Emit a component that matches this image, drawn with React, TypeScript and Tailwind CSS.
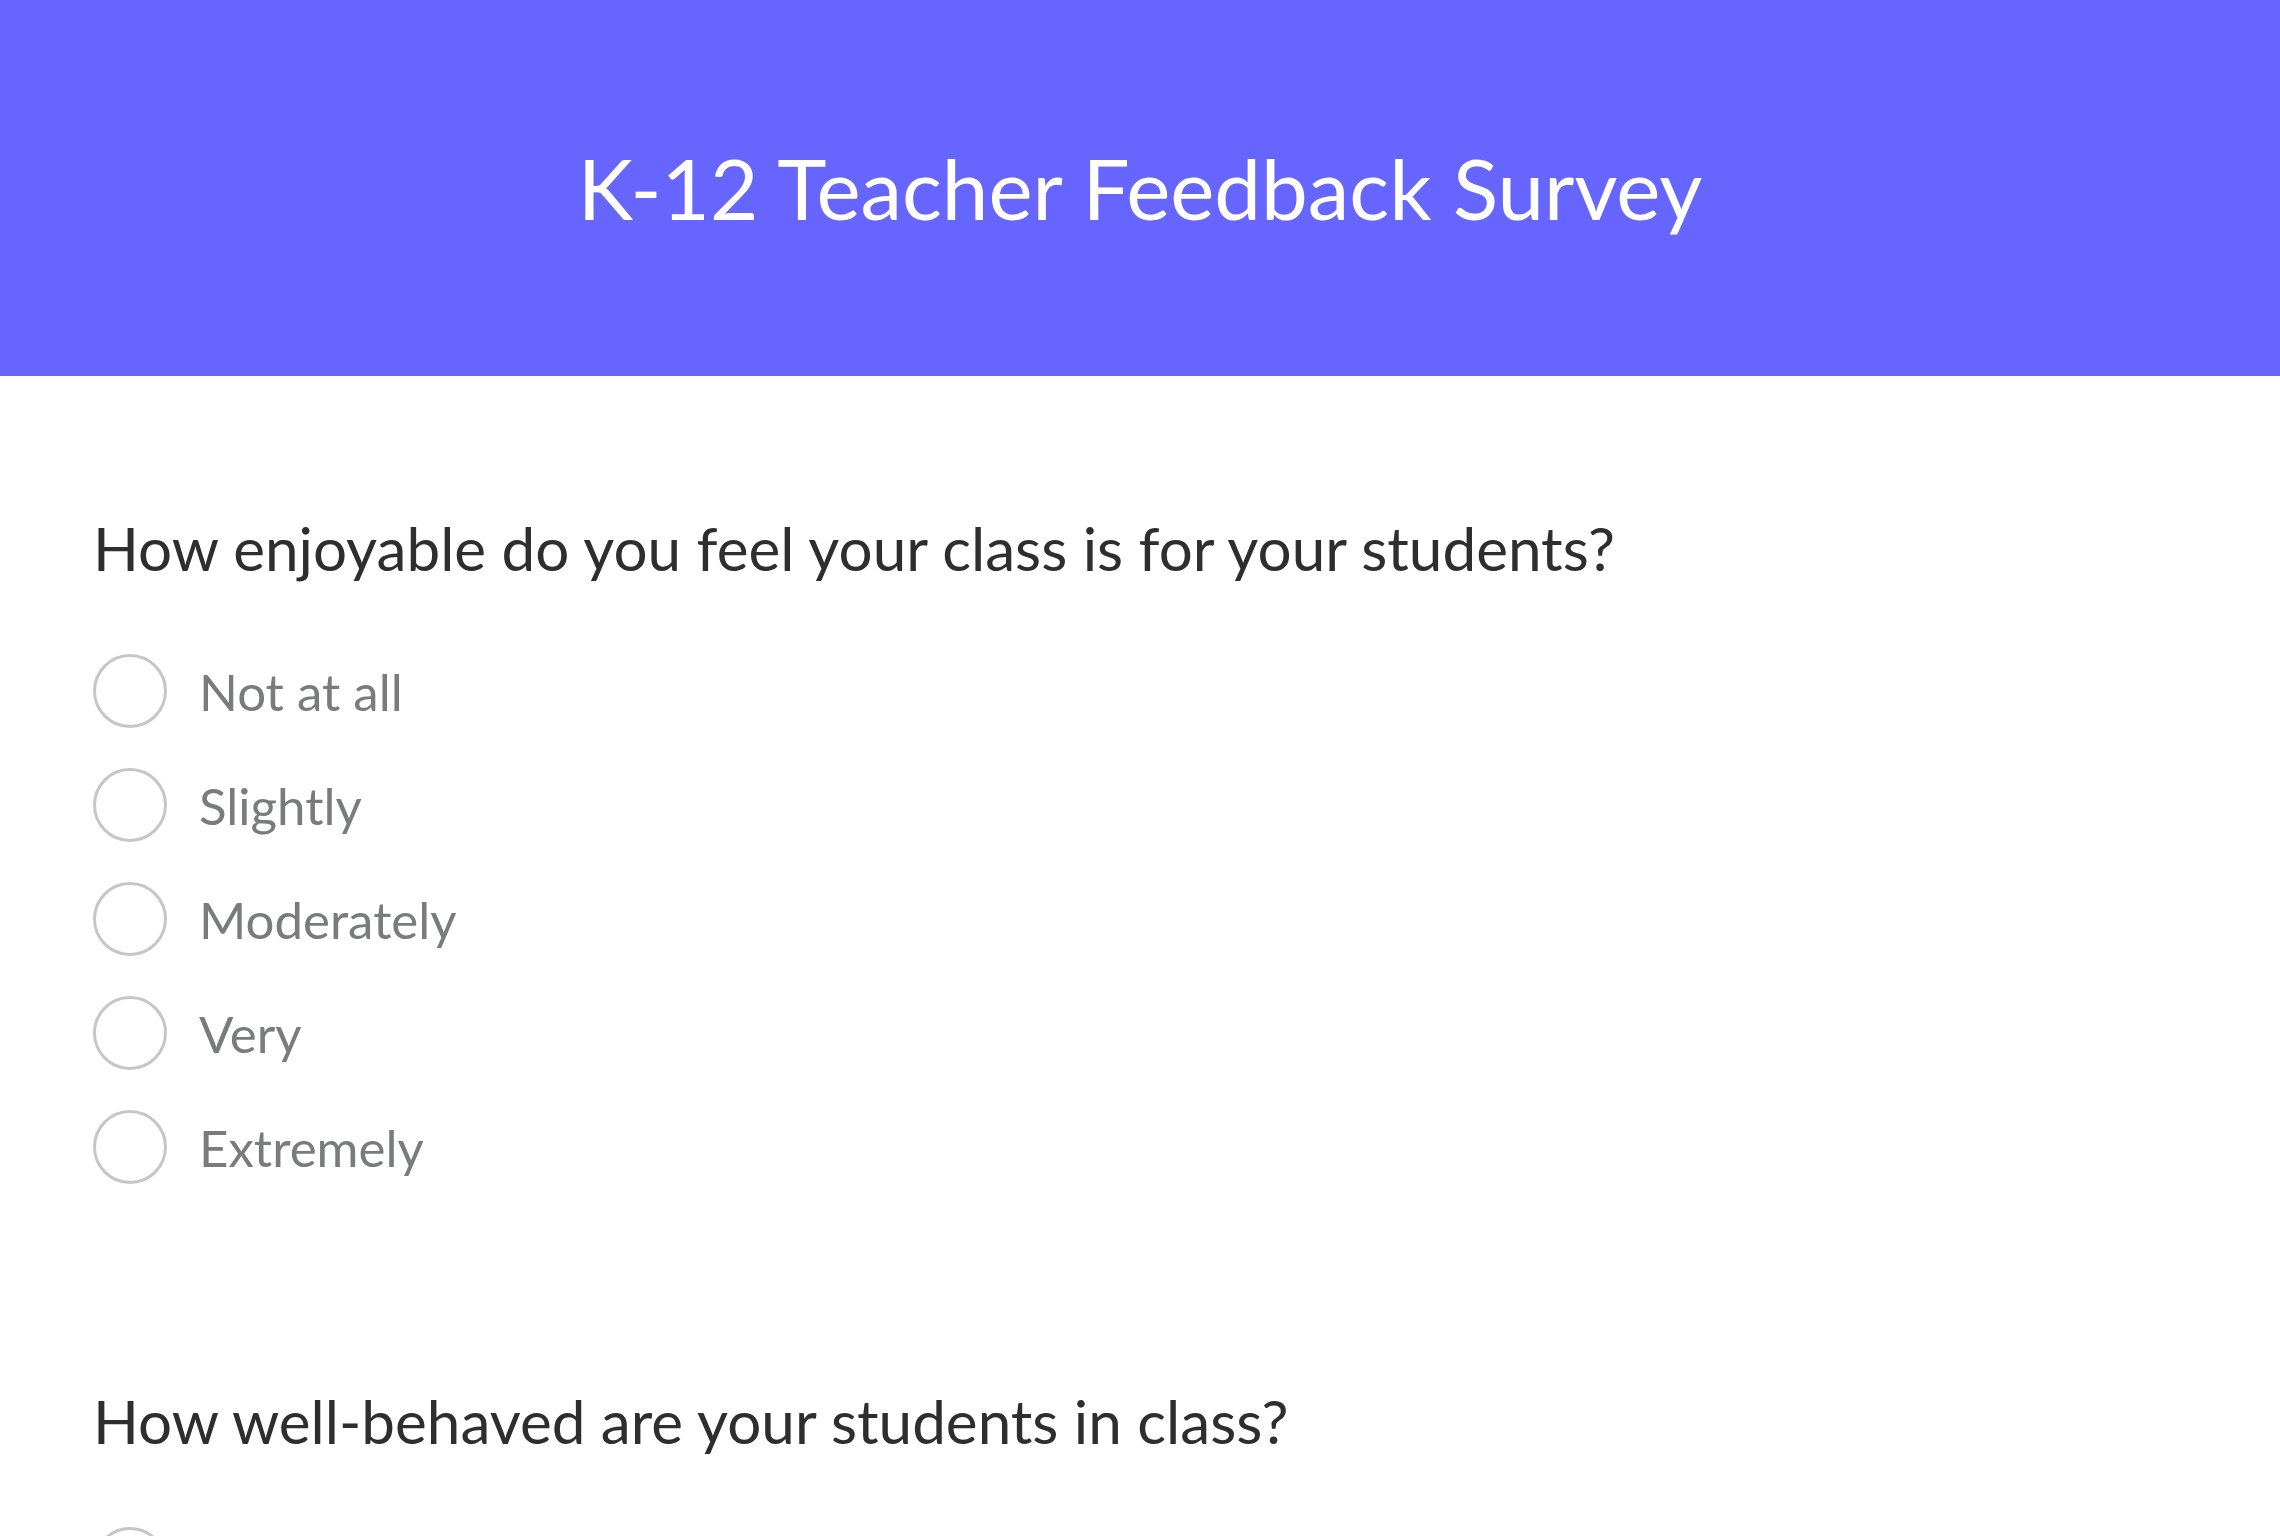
import React from "react";

const OPTIONS = ["Not at all", "Slightly", "Moderately", "Very", "Extremely"];

const QUESTIONS = [
  { id: "q1", text: "How enjoyable do you feel your class is for your students?", options: OPTIONS },
  { id: "q2", text: "How well-behaved are your students in class?", options: OPTIONS },
];

function Radio({ label }: { label: string }) {
  return (
    <label className="flex h-[114px] items-center gap-[32px] cursor-pointer">
      <span className="block h-[74px] w-[74px] shrink-0 rounded-full border-[3px] border-[#c6c6c6] bg-white" />
      <span className="text-[51px] leading-[1.2] text-[#7a7b7d]">{label}</span>
    </label>
  );
}

export default function App() {
  return (
    <div className="h-screen overflow-hidden bg-white font-['Lato','Liberation_Sans',sans-serif]">
      <header className="flex h-[376px] items-center justify-center bg-[#6666ff]">
        <h1 className="text-[83.5px] leading-[1.2] text-white">K-12 Teacher Feedback Survey</h1>
      </header>

      <main className="flex flex-col gap-[181px] px-[93px] pt-[136px] pb-20">
        {QUESTIONS.map((q) => (
          <section key={q.id}>
            <h2 className="text-[60.2px] leading-[1.2] text-[#2e2e2e]">{q.text}</h2>
            <div className="mt-[50px] flex flex-col">
              {q.options.map((o) => (
                <Radio key={o} label={o} />
              ))}
            </div>
          </section>
        ))}
      </main>
    </div>
  );
}
